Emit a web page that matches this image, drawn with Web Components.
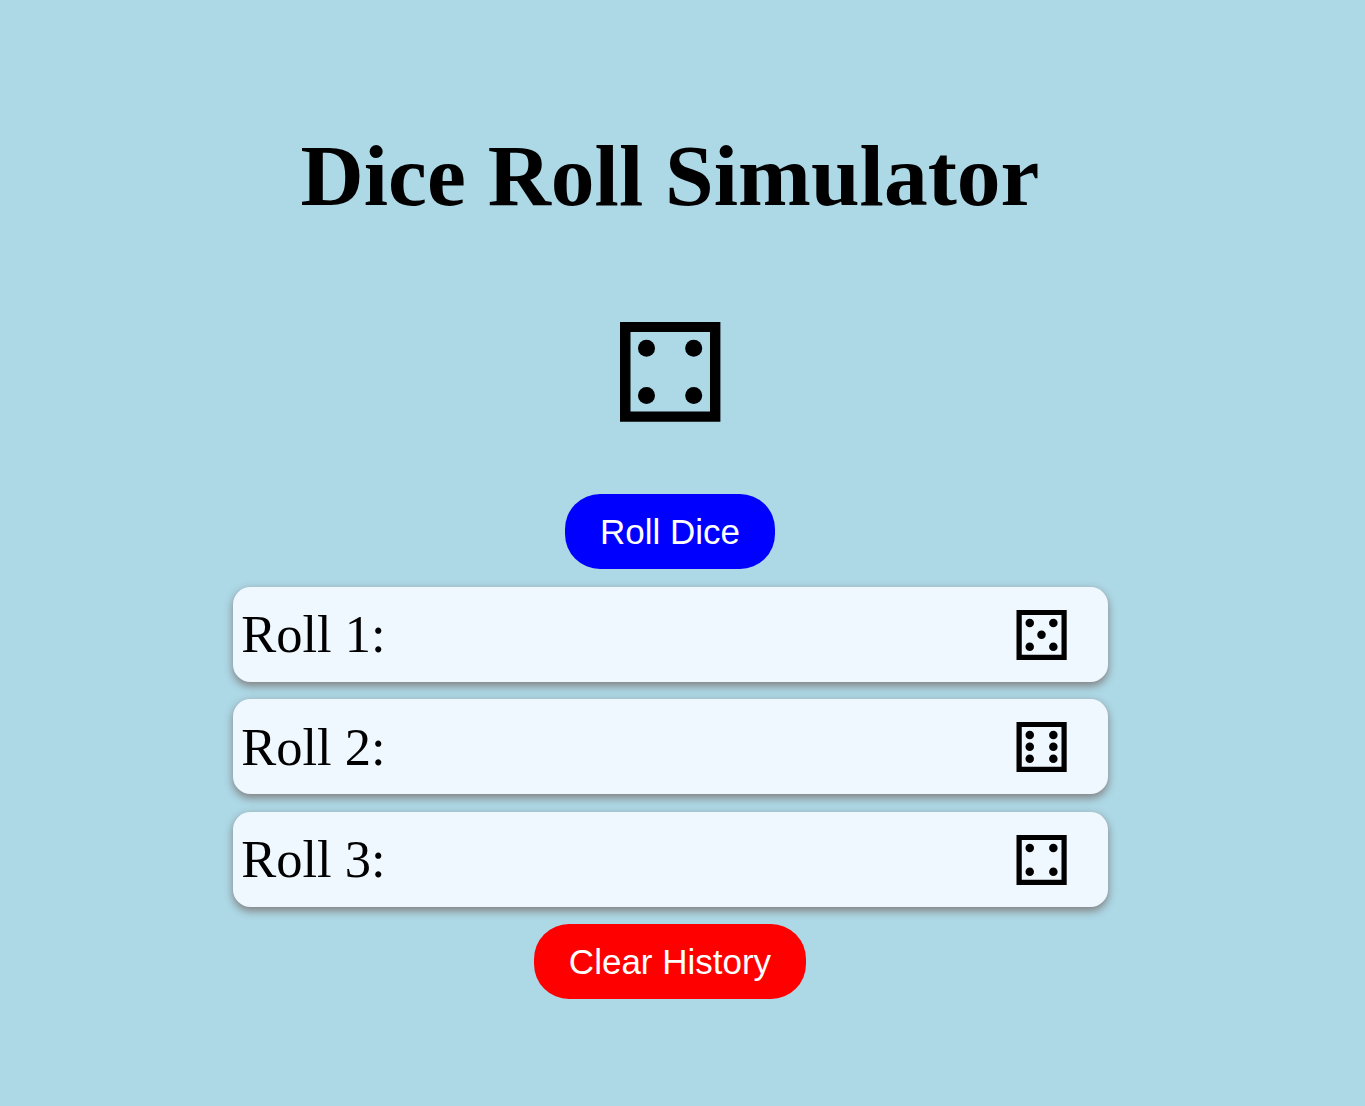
<!DOCTYPE html>
<html lang="en">
<head>
<meta charset="utf-8">
<title>Dice Roll Simulator</title>
<style>
html, body { margin: 0; height: 100%; background: lightblue; overflow: hidden; }
body { font-family: "Liberation Serif", "Times New Roman", serif; color: #000; }
</style>
</head>
<body>
<dice-app></dice-app>
<script>
const define = (name, html, setup) => {
  customElements.define(name, class extends HTMLElement {
    constructor() {
      super();
      this.attachShadow({ mode: 'open' }).innerHTML = html;
    }
    connectedCallback() { if (setup) setup(this, this.shadowRoot); }
  });
};

// Pip centres for each face, on a 100-unit square.
const L = 26.5, M = 50, H = 73.7;
const PIPS = {
  1: [[M, M]],
  2: [[L, L], [H, H]],
  3: [[L, L], [M, M], [H, H]],
  4: [[L, L], [H, L], [L, H], [H, H]],
  5: [[L, L], [H, L], [M, M], [L, H], [H, H]],
  6: [[L, L], [H, L], [L, M], [H, M], [L, H], [H, H]]
};

define('dice-face', `
  <style>
    :host { display: block; width: var(--die-size, 100px); height: var(--die-size, 100px); flex: none; }
    svg { display: block; width: 100%; height: 100%; overflow: visible; }
  </style>
  <svg viewBox="0 0 100 100" aria-hidden="true"></svg>`,
  (el, root) => {
    const pips = PIPS[el.getAttribute('value')]
      .map(([x, y]) => `<circle cx="${x}" cy="${y - 0.3}" r="8.5"/>`).join('');
    const dx = el.getAttribute('shift') || 0;
    root.querySelector('svg').innerHTML =
      `<g transform="translate(${dx} 0)"><path fill-rule="evenodd" d="M0 0H100.4V99.8H0ZM10.5 10V89.6H90V10Z"/>${pips}</g>`;
  });

define('pill-button', `
  <style>
    :host { display: block; flex: none; }
    button {
      display: block; box-sizing: border-box; height: 75px; margin: 0;
      padding: 0 35px; border: 0; border-radius: 35px;
      background: var(--pill, blue); color: #fff; cursor: pointer;
      font: 35px/40px "Liberation Sans", Arial, sans-serif;
    }
  </style>
  <button><slot></slot></button>`);

define('roll-row', `
  <style>
    :host {
      display: flex; box-sizing: border-box; align-items: center; justify-content: space-between;
      height: 95px; padding: 0 41.5px 0 8.75px; border-radius: 17.5px;
      background: aliceblue; font-size: 52.5px; line-height: 60px;
      box-shadow: 0 3.5px 8.75px gray;
      --die-size: 50px;
    }
    ::slotted(dice-face) { margin-top: 1px; }
  </style>
  <span><slot></slot></span>
  <slot name="face"></slot>`);

define('dice-app', `
  <style>
    :host { display: flex; box-sizing: border-box; width: 1340px; padding-top: 126px; flex-direction: column; align-items: center; }
    h1 { margin: 0; font-size: 87.5px; line-height: 100px; font-weight: bold; white-space: nowrap; }
    .current { margin: 96px 0 72px; }
    .history { display: flex; flex-direction: column; gap: 17.5px; width: 875px; margin: 17.5px 0; }
    .clear { --pill: red; }
  </style>
  <h1>Dice Roll Simulator</h1>
  <dice-face class="current" value="4"></dice-face>
  <pill-button>Roll Dice</pill-button>
  <div class="history">
    <roll-row>Roll 1:<dice-face slot="face" value="5" shift="1"></dice-face></roll-row>
    <roll-row>Roll 2:<dice-face slot="face" value="6" shift="1"></dice-face></roll-row>
    <roll-row>Roll 3:<dice-face slot="face" value="4" shift="1"></dice-face></roll-row>
  </div>
  <pill-button class="clear">Clear History</pill-button>`);
</script>
</body>
</html>
